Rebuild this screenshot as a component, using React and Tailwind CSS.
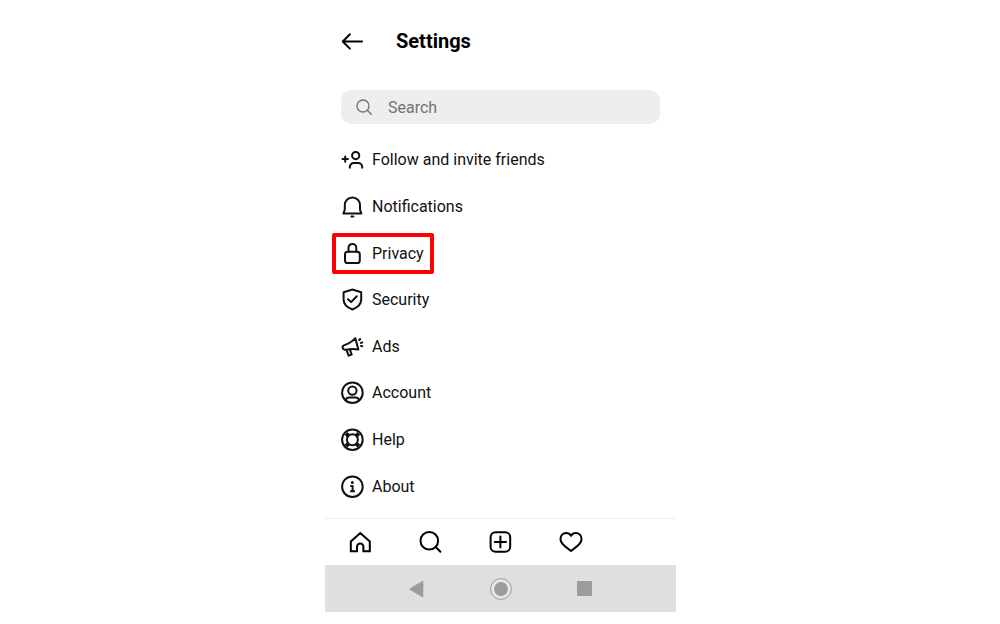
import React, { useState } from 'react';

function Icon({ children, className = 'size-6' }) {
  return (
    <svg
      viewBox="0 0 24 24"
      fill="none"
      stroke="currentColor"
      strokeWidth="2"
      strokeLinecap="round"
      strokeLinejoin="round"
      aria-hidden="true"
      className={`${className} shrink-0`}
    >
      {children}
    </svg>
  );
}

const menuItems = [
  {
    label: 'Follow and invite friends',
    icon: (
      <>
        <circle cx="15.7" cy="7.6" r="3.6" />
        <path d="M9.8 19.7v-.6a4 4 0 0 1 4-4h4.400a4 4 0 0 1 4 4v.6" />
        <path d="M5.200 8.400v5.400M2.500 11.100h5.400" />
      </>
    ),
  },
  {
    label: 'Notifications',
    icon: (
      <>
        <path d="M12.4 2.6c-4.5 0-7.6 3.300-7.600 7.700v4.300l-1.400 4h18l-1.400-4v-4.300c0-4.400-3.100-7.700-7.600-7.700z" />
        <path d="M11.4 21.500h2" />
      </>
    ),
  },
  {
    label: 'Privacy',
    icon: (
      <>
        <rect x="5" y="9.800" width="14.800" height="11.200" rx="2.600" />
        <path d="M8.500 9.800V5.800a3.900 3.900 0 0 1 7.800 0v4" />
      </>
    ),
  },
  {
    label: 'Security',
    icon: (
      <>
        <path d="M12.4 1.500 3.600 4.300v7.400c0 4.400 3.400 7.600 8.800 9.800 5.400-2.200 8.800-5.400 8.800-9.800V4.300z" />
        <path d="m8 11.200 3.100 2.900 5.700-5.800" />
      </>
    ),
  },
  {
    label: 'Ads',
    icon: (
      <>
        <path d="M15.300 3.200C12.500 6.400 9 8.700 4.400 10.100c-1.500.5-2.100 1.600-1.700 2.900.4 1.400 1.400 2 2.900 1.700 4.500-.9 8.600-1.100 12.800-.3z" />
        <path d="m6.700 15.400 1.900 5.200 3.100-1.100-1.800-4.900" />
        <path d="m19.200 5 1-1M20.800 7.900l1.500-.4M20.900 10.900l1.400.4" />
      </>
    ),
  },
  {
    label: 'Account',
    icon: (
      <>
        <circle cx="12.4" cy="11.700" r="10.300" />
        <circle cx="12.400" cy="9.600" r="4.200" />
        <path d="M5.600 19.300c.6-1.800 1.900-2.800 3.700-2.800h6.200c1.800 0 3.100 1 3.700 2.800" />
      </>
    ),
  },
  {
    label: 'Help',
    icon: (
      <>
        <circle cx="12.4" cy="11.700" r="10.300" />
        <circle cx="12.400" cy="11.700" r="5.500" />
        <path
          strokeWidth="4"
          strokeLinecap="butt"
          d="M8.500 7.800 6 5.300M16.300 7.800l2.500-2.500M8.500 15.600 6 18.100M16.300 15.600l2.500 2.500"
        />
      </>
    ),
  },
  {
    label: 'About',
    icon: (
      <>
        <circle cx="12.4" cy="11.700" r="10.300" />
        <circle cx="12.300" cy="7.500" r="1.500" fill="currentColor" stroke="none" />
        <path strokeLinecap="butt" d="M10.300 10.900h2.300v5.300M10.100 16.200h4.800" />
      </>
    ),
  },
];

const tabs = [
  {
    label: 'Home',
    icon: (
      <path
        strokeLinecap="butt"
        strokeLinejoin="miter"
        d="M12.300 3 2.800 11.500v9.800H9v-4.500a3.200 3.200 0 0 1 6.400 0v4.500h6.400v-9.800z"
      />
    ),
  },
  {
    label: 'Search',
    icon: (
      <>
        <circle cx="11.300" cy="10.700" r="8.800" />
        <path d="m17.600 17 4.800 4.800" />
      </>
    ),
  },
  {
    label: 'New post',
    icon: (
      <>
        <rect x="2.600" y="2.200" width="19.600" height="19.600" rx="5" />
        <path d="M12.400 6.400v11.200M6.800 12H18" />
      </>
    ),
  },
  {
    label: 'Activity',
    icon: (
      <path d="M12 5.800C10.900 4 9.200 3 7.200 3 3.900 3 1.500 5.500 1.500 8.900c0 3 1.700 4.900 4.300 7.200L12 21l6.200-4.900c2.600-2.300 4.300-4.200 4.300-7.200 0-3.400-2.400-5.900-5.700-5.900-2 0-3.700 1-4.800 2.800z" />
    ),
  },
];

function App() {
  const [search, setSearch] = useState('');
  const [selected, setSelected] = useState('Privacy');

  return (
    <div className="bg-white pl-px font-['Roboto',sans-serif] text-[#111]">
      <div className="mx-auto w-full max-w-[351px]">
        <header className="flex h-[82px] items-center gap-8 pl-4">
          <button type="button" aria-label="Back" className="text-black">
            <Icon className="h-6 w-[23px]">
              <path d="M22 12.500H2M9.300 5 1.800 12.500 9.300 20" />
            </Icon>
          </button>
          <h1 className="text-xl leading-6 font-bold text-black">Settings</h1>
        </header>

        <label className="mx-4 mt-2 flex h-[34px] items-center gap-4 rounded-[10px] bg-[#eee] px-[15px] text-[#737373]">
          <Icon className="size-4">
            <circle cx="10.500" cy="10.500" r="9" />
            <path d="m17 17 6 6" />
          </Icon>
          <input
            type="text"
            aria-label="Search"
            value={search}
            onChange={(e) => setSearch(e.target.value)}
            placeholder="Search"
            className="h-full min-w-0 flex-1 bg-transparent text-base outline-none placeholder:text-[#737373]"
          />
        </label>

        <ul className="mt-[13px] grid h-[373px] auto-rows-fr px-[7px]">
          {menuItems.map((item) => (
            <li key={item.label} className="flex items-center">
              <a
                href={`#${item.label.toLowerCase().replaceAll(' ', '-')}`}
                onClick={() => setSelected(item.label)}
                className={`flex h-[41px] items-center gap-2 rounded-xs border-4 px-1 text-base ${
                  selected === item.label ? 'border-[#f00]' : 'border-transparent'
                }`}
              >
                <Icon>{item.icon}</Icon>
                <span className="pr-0.5">{item.label}</span>
              </a>
            </li>
          ))}
        </ul>

        <nav className="mt-2 grid h-[47px] grid-cols-5 border-t border-[#efefef] text-black">
          {tabs.map((tab) => (
            <button key={tab.label} type="button" aria-label={tab.label} className="flex items-center justify-center">
              <Icon>{tab.icon}</Icon>
            </button>
          ))}
        </nav>

        <div className="flex h-[47px] justify-center bg-[#dfdfdf] text-[#9c9c9c]">
          <button type="button" aria-label="System back" className="flex w-[84px] items-center justify-center">
            <svg viewBox="0 0 24 24" fill="currentColor" className="size-6">
              <path d="M18.300 4.500v15.200q0 .9-.9.500L4.800 12.800q-.9-.6 0-1.200L17.400 4q.9-.4.9.5z" />
            </svg>
          </button>
          <button type="button" aria-label="System home" className="flex w-[84px] items-center justify-center">
            <svg viewBox="0 0 24 24" className="size-6">
              <circle cx="12" cy="12" r="10.400" fill="#e6e6e6" stroke="currentColor" />
              <circle cx="12" cy="12" r="6.900" fill="currentColor" />
            </svg>
          </button>
          <button type="button" aria-label="Recent apps" className="flex w-[84px] items-center justify-center">
            <span className="size-[15px] rounded-[1px] bg-[#9c9c9c]" />
          </button>
        </div>
      </div>
    </div>
  );
}

export default App;
